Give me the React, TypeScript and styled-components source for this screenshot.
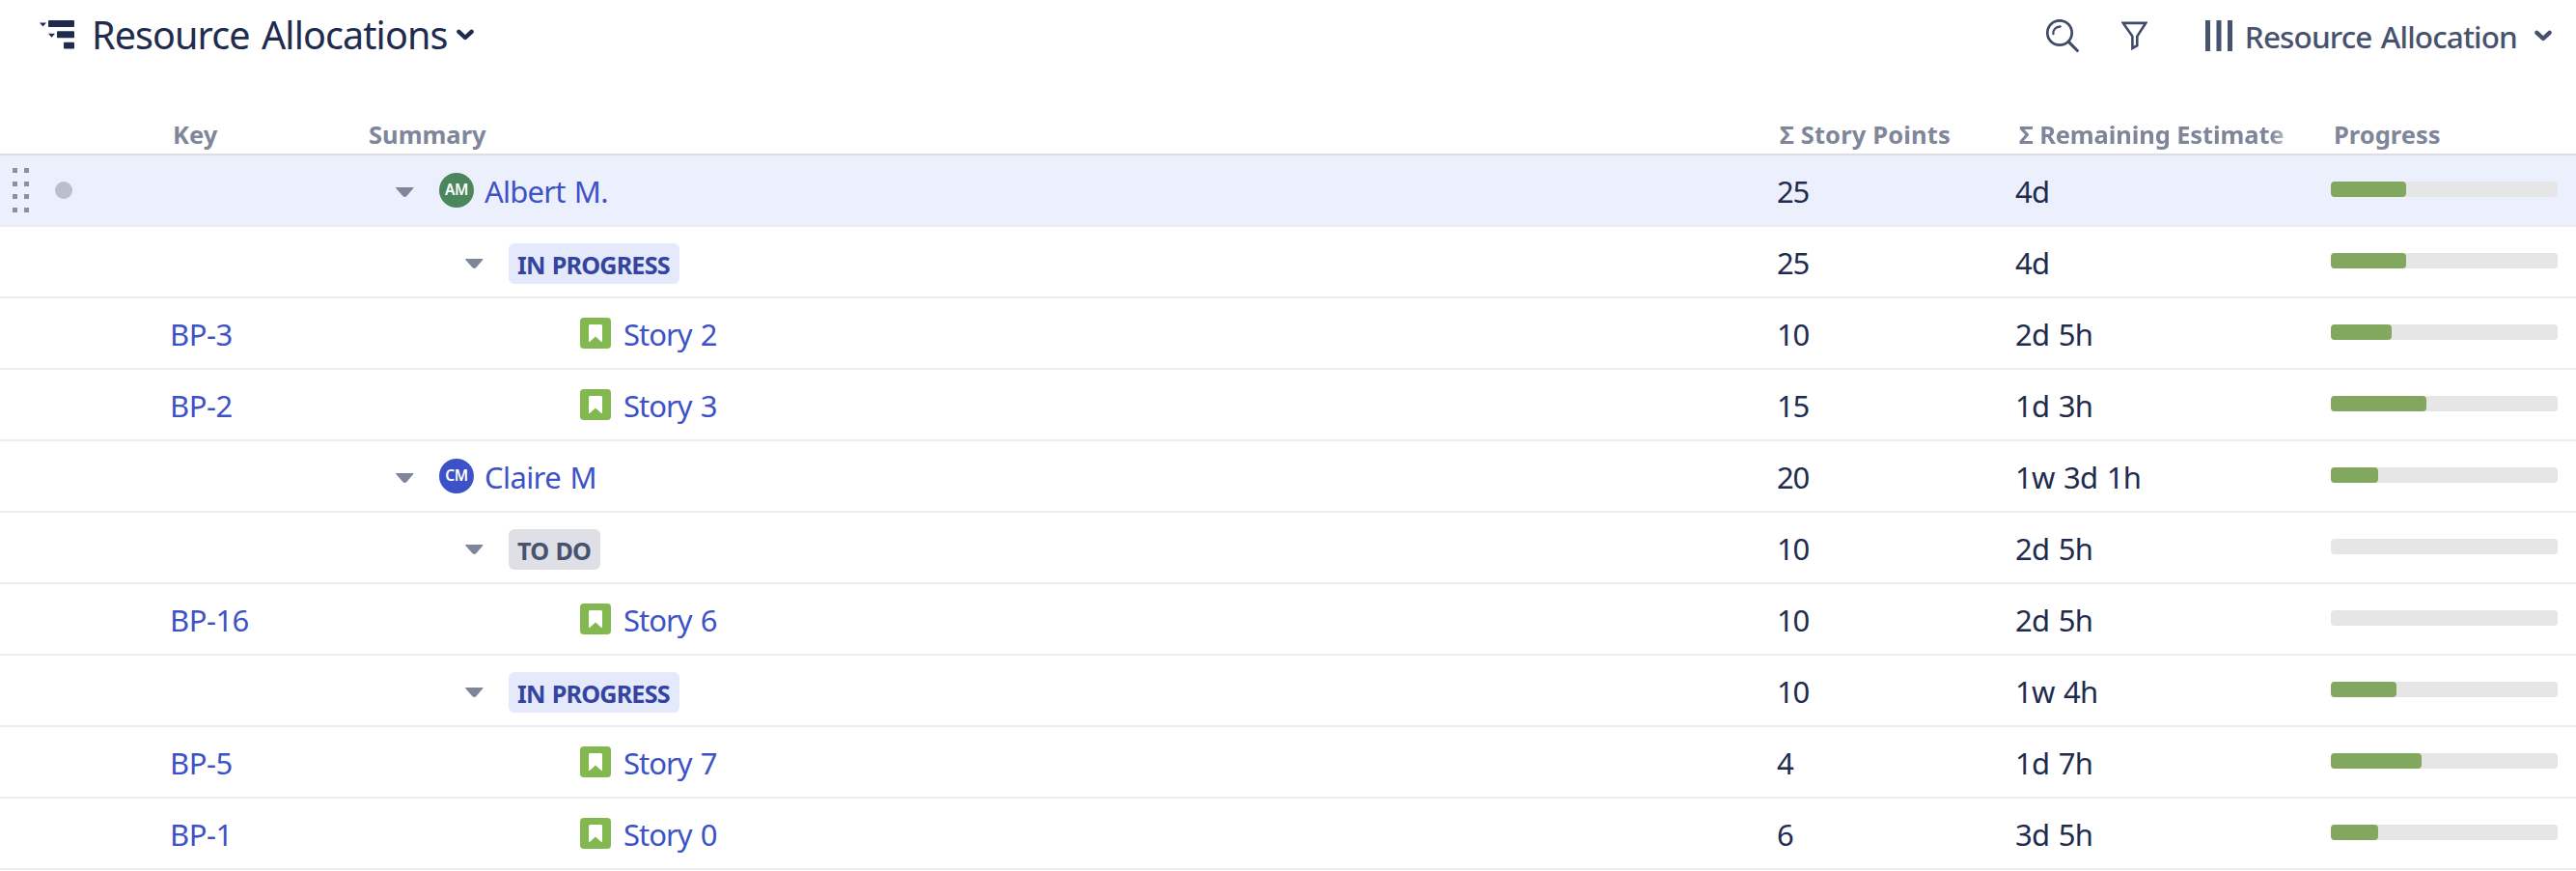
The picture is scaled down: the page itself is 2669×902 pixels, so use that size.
import React from 'react';
import styled, { createGlobalStyle, css } from 'styled-components';

const GlobalStyle = createGlobalStyle`
  *, *::before, *::after { box-sizing: border-box; }
  body {
    margin: 0;
    background: #ffffff;
    font-family: "Noto Sans", "Open Sans", sans-serif;
    color: #202b4d;
    overflow: hidden;
  }
`;

const Page = styled.main`
  width: 100%;
  height: 902px;
  overflow: hidden;
`;

const Toolbar = styled.header`
  display: flex;
  align-items: flex-start;
  justify-content: space-between;
  height: 121px;
  padding: 0 25px 0 41px;
`;

const StructureButton = styled.button`
  display: flex;
  align-items: center;
  height: 72px;
  padding: 0;
  border: 0;
  background: none;
  color: #202b4d;
  font: inherit;
`;

const StructureName = styled.span`
  margin: 0 10px 0 18px;
  font-size: 39.5px;
  line-height: 72px;
  letter-spacing: -0.9px;
  word-spacing: 3px;
  white-space: nowrap;
`;

const Actions = styled.div`
  display: flex;
  align-items: flex-start;
`;

const IconButton = styled.button<{ $gap: number }>`
  display: flex;
  align-items: center;
  height: 74px;
  margin-right: ${(p) => p.$gap}px;
  padding: 0;
  border: 0;
  background: none;
  color: #404b68;
`;

const ViewButton = styled.button`
  display: flex;
  align-items: center;
  height: 74px;
  padding: 0;
  border: 0;
  background: none;
  color: #47536e;
  font: inherit;
`;

const ViewName = styled.span`
  margin: 0 18px 0 13px;
  padding-top: 2px;
  font-size: 31.5px;
  font-weight: 500;
  line-height: 74px;
  letter-spacing: -0.87px;
  word-spacing: 2px;
  white-space: nowrap;
`;

const columns = css`
  display: grid;
  grid-template-columns: 176px 205px minmax(0, 1fr) 247px 327px 254px;
`;

const HeaderRow = styled.div`
  ${columns}
  height: 40px;
  border-bottom: 2px solid #dddddd;
`;

const HeaderCell = styled.div<{ $indent?: number; $spacing?: number }>`
  padding-left: ${(p) => p.$indent ?? 0}px;
  color: #7f869a;
  font-size: 25.5px;
  font-weight: 700;
  line-height: 36px;
  letter-spacing: ${(p) => p.$spacing ?? 0}px;
  white-space: nowrap;
`;

const FadedLabel = styled.span`
  display: inline-block;
  mask-image: linear-gradient(to right, #000 calc(100% - 14px), rgba(0, 0, 0, 0.6));
`;

const Row = styled.div<{ $active?: boolean }>`
  ${columns}
  height: 74px;
  border-bottom: 2px solid #ededed;
  background: ${(p) => (p.$active ? '#ecf0fc' : '#ffffff')};
`;

const Cell = styled.div`
  display: flex;
  align-items: center;
  height: 72px;
`;

const HandleCell = styled(Cell)`
  padding-left: 13px;
  gap: 27px;
`;

const Grip = styled.div`
  display: grid;
  grid-template-columns: 5px 5px;
  grid-auto-rows: 5px;
  gap: 8.5px 7px;

  i { background: #8b90a1; }
`;

const Marker = styled.span`
  width: 18px;
  height: 18px;
  border-radius: 50%;
  background: #bbbfcb;
`;

const Value = styled.span<{ $link?: boolean; $spacing?: number }>`
  padding-top: 2px;
  color: ${(p) => (p.$link ? '#3d52c6' : '#202b4d')};
  font-size: 31px;
  line-height: 70px;
  letter-spacing: ${(p) => p.$spacing ?? -0.7}px;
  word-spacing: 2px;
  white-space: nowrap;
`;

const TreeCell = styled(Cell)<{ $level: number }>`
  padding-left: ${(p) => 29 + p.$level * 72}px;
`;

const Twisty = styled.span`
  display: flex;
  flex: none;
  width: 45px;
  padding-top: 4px;
`;

const Avatar = styled.span<{ $color: string }>`
  width: 36px;
  height: 36px;
  margin-right: 11px;
  border-radius: 50%;
  background: ${(p) => p.$color};
  color: #ffffff;
  font-size: 15.5px;
  font-weight: 600;
  line-height: 34px;
  letter-spacing: -0.4px;
  text-align: center;
`;

const StoryBadge = styled.span`
  display: flex;
  align-items: center;
  justify-content: center;
  width: 32px;
  height: 32px;
  margin: 0 13px 0 2px;
  border-radius: 4px;
  background: #82b84f;
`;

const Lozenge = styled.span<{ $tone: 'progress' | 'todo' }>`
  height: 42px;
  margin-top: 4px;
  padding: 2px 10px 0 9px;
  border-radius: 6px;
  background: ${(p) => (p.$tone === 'progress' ? '#e4eafc' : '#dfe0e6')};
  color: ${(p) => (p.$tone === 'progress' ? '#34449f' : '#47536e')};
  font-size: 25.2px;
  font-weight: 700;
  line-height: 40px;
  letter-spacing: -0.85px;
  word-spacing: 1.5px;
  white-space: nowrap;
`;

const Track = styled.div`
  width: 235px;
  height: 16px;
  margin-bottom: 2px;
  border-radius: 4px;
  background: #e6e6e6;
`;

const Fill = styled.div<{ $percent: number }>`
  width: ${(p) => p.$percent}%;
  height: 100%;
  border-radius: 4px;
  background: #82a860;
`;

const StructureIcon = () => (
  <svg width="36" height="30" viewBox="0 0 36 30" fill="currentColor">
    <path d="M0 2.6h7L3.5 6.6zM9 13.8h7l-3.5 4z" />
    <rect x="9" y="0" width="27" height="7" rx="0.8" />
    <rect x="18" y="11.3" width="18" height="7" rx="0.8" />
    <rect x="25" y="22.8" width="11" height="6.7" rx="0.8" />
  </svg>
);

const Chevron = () => (
  <svg width="18" height="12" viewBox="0 0 18 12" fill="none" stroke="currentColor" strokeWidth="4.4">
    <path d="M2.4 2.8 9 9l6.6-6.2" strokeLinecap="round" strokeLinejoin="round" />
  </svg>
);

const SearchIcon = () => (
  <svg width="34" height="34" viewBox="0 0 34 34" fill="none" stroke="currentColor" strokeLinecap="round">
    <circle cx="14" cy="14" r="12.7" strokeWidth="2.7" />
    <path d="M7.4 15.2c-.4-4.4 2.6-7.5 7.2-7.7" strokeWidth="2.3" />
    <path d="M23.4 23.4 32.4 32.5" strokeWidth="3" />
  </svg>
);

const FilterIcon = () => (
  <svg width="27" height="30" viewBox="0 0 27 30" fill="none" stroke="currentColor" strokeWidth="2.6">
    <path d="M1.8 1.9h23.4L16.3 15.6v9.6l-4.9 2.8V15.6z" />
  </svg>
);

const ColumnsIcon = () => (
  <svg width="28" height="32" viewBox="0 0 28 32" fill="currentColor">
    <rect x="0" width="5" height="32" />
    <rect x="11.5" width="5" height="32" />
    <rect x="23" width="5" height="32" />
  </svg>
);

const Caret = () => (
  <svg width="19" height="10" viewBox="0 0 19 10" fill="#7f869a">
    <path d="M.8 0h17c.8 0 1 .6.5 1.1L11.2 9.2c-1 1-2.6 1-3.6 0L.3 1.1C-.2.6 0 0 .8 0z" />
  </svg>
);

const BookmarkIcon = () => (
  <svg width="14" height="18" viewBox="0 0 14 18" fill="#ffffff">
    <path d="M1.5 0h11C13.3 0 14 .7 14 1.5v15.7c0 .8-.7 1-1.2.5L7 12.5l-5.800 5.200c-.5.5-1.200.3-1.200-.5V1.500C0 .7.7 0 1.500 0z" />
  </svg>
);

type Item =
  | { kind: 'person'; name: string; initials: string; color: string; spacing: number }
  | { kind: 'status'; name: string; tone: 'progress' | 'todo' }
  | { kind: 'story'; name: string; key: string };

type RowData = { item: Item; points: number; remaining: string; percent: number; active?: boolean };

const rows: RowData[] = [
  { item: { kind: 'person', name: 'Albert M.', initials: 'AM', color: '#4b865d', spacing: -0.8 }, points: 25, remaining: '4d', percent: 33, active: true },
  { item: { kind: 'status', name: 'IN PROGRESS', tone: 'progress' }, points: 25, remaining: '4d', percent: 33 },
  { item: { kind: 'story', name: 'Story 2', key: 'BP-3' }, points: 10, remaining: '2d 5h', percent: 27 },
  { item: { kind: 'story', name: 'Story 3', key: 'BP-2' }, points: 15, remaining: '1d 3h', percent: 42 },
  { item: { kind: 'person', name: 'Claire M', initials: 'CM', color: '#3d52c6', spacing: -0.6 }, points: 20, remaining: '1w 3d 1h', percent: 21 },
  { item: { kind: 'status', name: 'TO DO', tone: 'todo' }, points: 10, remaining: '2d 5h', percent: 0 },
  { item: { kind: 'story', name: 'Story 6', key: 'BP-16' }, points: 10, remaining: '2d 5h', percent: 0 },
  { item: { kind: 'status', name: 'IN PROGRESS', tone: 'progress' }, points: 10, remaining: '1w 4h', percent: 29 },
  { item: { kind: 'story', name: 'Story 7', key: 'BP-5' }, points: 4, remaining: '1d 7h', percent: 40 },
  { item: { kind: 'story', name: 'Story 0', key: 'BP-1' }, points: 6, remaining: '3d 5h', percent: 21 },
];

const levels = { person: 0, status: 1, story: 2 };

function Summary({ item }: { item: Item }) {
  return (
    <TreeCell $level={levels[item.kind]}>
      <Twisty>{item.kind !== 'story' && <Caret />}</Twisty>
      {item.kind === 'person' && (
        <>
          <Avatar $color={item.color}>{item.initials}</Avatar>
          <Value $link $spacing={item.spacing}>{item.name}</Value>
        </>
      )}
      {item.kind === 'status' && <Lozenge $tone={item.tone}>{item.name}</Lozenge>}
      {item.kind === 'story' && (
        <>
          <StoryBadge><BookmarkIcon /></StoryBadge>
          <Value $link $spacing={-1}>{item.name}</Value>
        </>
      )}
    </TreeCell>
  );
}

export default function App() {
  return (
    <Page>
      <GlobalStyle />
      <Toolbar>
        <StructureButton>
          <StructureIcon />
          <StructureName>Resource Allocations</StructureName>
          <Chevron />
        </StructureButton>
        <Actions>
          <IconButton $gap={44}><SearchIcon /></IconButton>
          <IconButton $gap={60}><FilterIcon /></IconButton>
          <ViewButton>
            <ColumnsIcon />
            <ViewName>Resource Allocation</ViewName>
            <Chevron />
          </ViewButton>
        </Actions>
      </Toolbar>
      <HeaderRow>
        <HeaderCell />
        <HeaderCell $indent={3}>Key</HeaderCell>
        <HeaderCell $indent={1}>Summary</HeaderCell>
        <HeaderCell $indent={3} $spacing={0.15}>Σ Story Points</HeaderCell>
        <HeaderCell $indent={4} $spacing={-0.12}><FadedLabel>Σ Remaining Estimate</FadedLabel></HeaderCell>
        <HeaderCell $indent={3}>Progress</HeaderCell>
      </HeaderRow>
      {rows.map((row, i) => (
        <Row key={i} $active={row.active}>
          <HandleCell>
            {row.active && (
              <>
                <Grip>{Array.from({ length: 8 }, (_, n) => <i key={n} />)}</Grip>
                <Marker />
              </>
            )}
          </HandleCell>
          <Cell>{row.item.kind === 'story' && <Value $link $spacing={-0.5}>{row.item.key}</Value>}</Cell>
          <Summary item={row.item} />
          <Cell><Value $spacing={-1.2}>{row.points}</Value></Cell>
          <Cell><Value>{row.remaining}</Value></Cell>
          <Cell>
            <Track>{row.percent > 0 && <Fill $percent={row.percent} />}</Track>
          </Cell>
        </Row>
      ))}
    </Page>
  );
}
